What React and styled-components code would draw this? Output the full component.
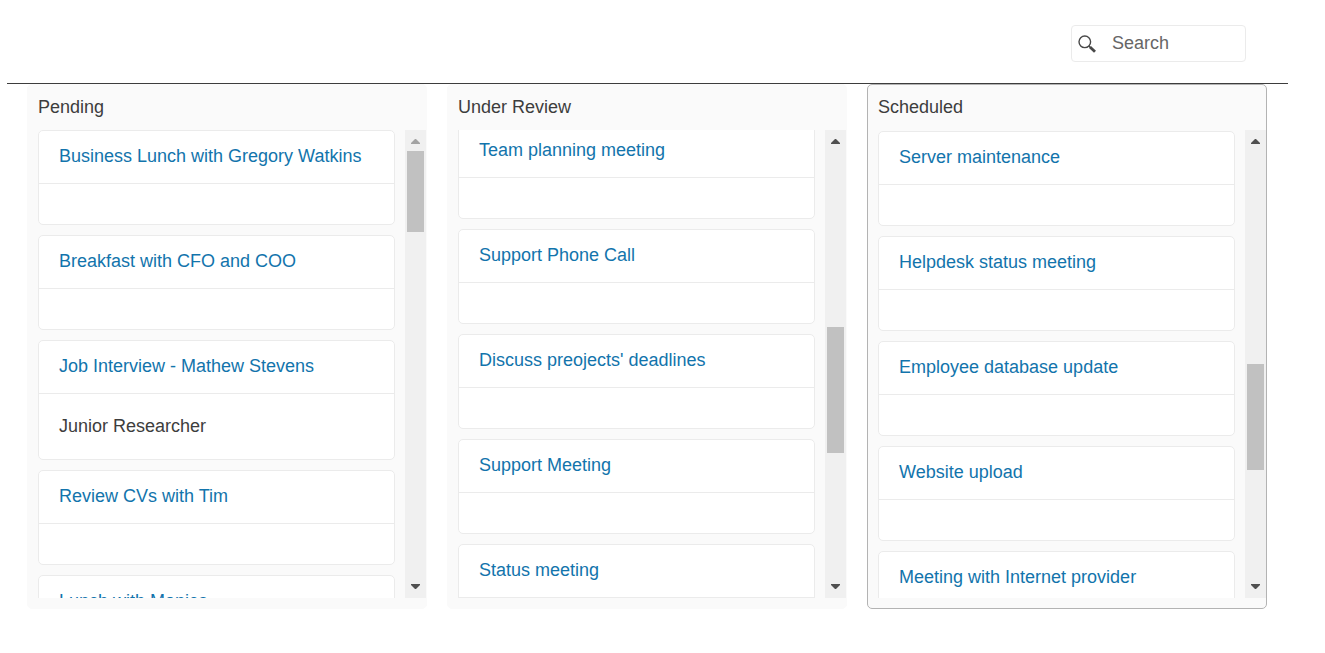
import React from "react";
import styled, { createGlobalStyle } from "styled-components";

const GlobalStyle = createGlobalStyle`
  *, *::before, *::after { box-sizing: border-box; }
  body {
    margin: 0;
    background: #fff;
    color: #3d3d3d;
    font: 18px/25px "Liberation Sans", Arial, sans-serif;
  }
`;

const Page = styled.div`
  padding: 0 37px 0 7px;
`;

const Header = styled.header`
  display: flex;
  justify-content: flex-end;
  padding: 25px 42px 21px 0;
  border-bottom: 1px solid #3d3d3d;
`;

const SearchBox = styled.label`
  display: flex;
  align-items: center;
  gap: 16px;
  width: 175px;
  height: 37px;
  padding: 0 6px;
  border: 1px solid #ebebeb;
  border-radius: 4px;
`;

const SearchIcon = styled.svg`
  flex: none;
  width: 18px;
  height: 18px;
`;

const SearchInput = styled.input`
  flex: 1;
  min-width: 0;
  padding: 0;
  border: 0;
  outline: 0;
  background: transparent;
  color: #3d3d3d;
  font: inherit;
  &::placeholder { color: #666; opacity: 1; }
`;

const Board = styled.main`
  display: flex;
  gap: 20px;
  padding: 0 21px 0 20px;
`;

const Column = styled.section`
  flex: 1;
  min-width: 0;
  padding: 10px 0 10px 10px;
  border: 1px solid ${(p) => (p.$active ? "#b3b3b3" : "#fafafa")};
  border-radius: 5px;
  background: #fafafa;
`;

const ColumnTitle = styled.h2`
  margin: 0 0 10px;
  font-size: 18px;
  font-weight: 400;
  line-height: 25px;
`;

const ColumnBody = styled.div`
  display: flex;
  gap: 10px;
  height: 468px;
`;

const Viewport = styled.div`
  flex: 1;
  min-width: 0;
  overflow: hidden;
`;

const CardList = styled.div`
  display: flex;
  flex-direction: column;
  gap: 10px;
  margin-top: ${(p) => p.$shift}px;
`;

const Card = styled.article`
  border: 1px solid #ebebeb;
  border-radius: 5px;
  background: #fff;
`;

const CardHeader = styled.header`
  padding: 13px 20px 14px;
  border-bottom: 1px solid #ebebeb;
`;

const CardLink = styled.a`
  display: block;
  color: #1274ac;
  text-decoration: none;
  white-space: nowrap;
`;

const CardText = styled.div`
  padding: 20px;
`;

const Scrollbar = styled.div`
  display: flex;
  flex: none;
  flex-direction: column;
  width: 21px;
  background: #f0f0f0;
`;

const ScrollButton = styled.button`
  display: flex;
  align-items: center;
  justify-content: center;
  height: 21px;
  padding: ${(p) => (p.$down ? "0 0 2px" : "2px 0 0")};
  border: 0;
  background: transparent;
  color: ${(p) => (p.disabled ? "#a3a3a3" : "#505050")};
`;

const Track = styled.div`
  flex: 1;
  padding: ${(p) => p.$start}px 2px 0;
`;

const Thumb = styled.div`
  height: ${(p) => p.$size}px;
  background: #c1c1c1;
`;

const columns = [
  {
    title: "Pending",
    shift: 0,
    start: 0,
    size: 81,
    cards: [
      { title: "Business Lunch with Gregory Watkins" },
      { title: "Breakfast with CFO and COO" },
      { title: "Job Interview - Mathew Stevens", text: "Junior Researcher" },
      { title: "Review CVs with Tim" },
      { title: "Lunch with Monica" },
    ],
  },
  {
    title: "Under Review",
    shift: -6,
    start: 176,
    size: 126,
    cards: [
      { title: "Team planning meeting" },
      { title: "Support Phone Call" },
      { title: "Discuss preojects' deadlines" },
      { title: "Support Meeting" },
      { title: "Status meeting" },
    ],
  },
  {
    title: "Scheduled",
    active: true,
    shift: 1,
    start: 213,
    size: 106,
    cards: [
      { title: "Server maintenance" },
      { title: "Helpdesk status meeting" },
      { title: "Employee database update" },
      { title: "Website upload" },
      { title: "Meeting with Internet provider" },
    ],
  },
];

function Arrow({ down }) {
  return (
    <svg width="9" height="5" viewBox="0 0 9 5" fill="currentColor" aria-hidden="true">
      <path d={down ? "M0 0h9v1L5 5H4L0 1z" : "M0 5h9V4L5 0H4L0 4z"} />
    </svg>
  );
}

export default function App() {
  return (
    <>
      <GlobalStyle />
      <Page>
        <Header>
          <SearchBox>
            <SearchIcon viewBox="0 0 18 18" fill="none" stroke="#484848" aria-hidden="true">
              <circle cx="6.8" cy="6.8" r="5.8" strokeWidth="1.4" />
              <path d="M10.8 10.8l1.6 1.6" strokeWidth="1.4" />
              <path d="M12 12l5 4.800" strokeWidth="2.800" />
            </SearchIcon>
            <SearchInput type="text" placeholder="Search" aria-label="Search" />
          </SearchBox>
        </Header>
        <Board>
          {columns.map((column) => (
            <Column key={column.title} $active={column.active}>
              <ColumnTitle>{column.title}</ColumnTitle>
              <ColumnBody>
                <Viewport>
                  <CardList $shift={column.shift}>
                    {column.cards.map((card) => (
                      <Card key={card.title}>
                        <CardHeader>
                          <CardLink href="#">{card.title}</CardLink>
                        </CardHeader>
                        <CardText>{card.text}</CardText>
                      </Card>
                    ))}
                  </CardList>
                </Viewport>
                <Scrollbar>
                  <ScrollButton type="button" aria-label="Scroll up" disabled={column.start === 0}>
                    <Arrow />
                  </ScrollButton>
                  <Track $start={column.start}>
                    <Thumb $size={column.size} />
                  </Track>
                  <ScrollButton type="button" aria-label="Scroll down" $down>
                    <Arrow down />
                  </ScrollButton>
                </Scrollbar>
              </ColumnBody>
            </Column>
          ))}
        </Board>
      </Page>
    </>
  );
}
